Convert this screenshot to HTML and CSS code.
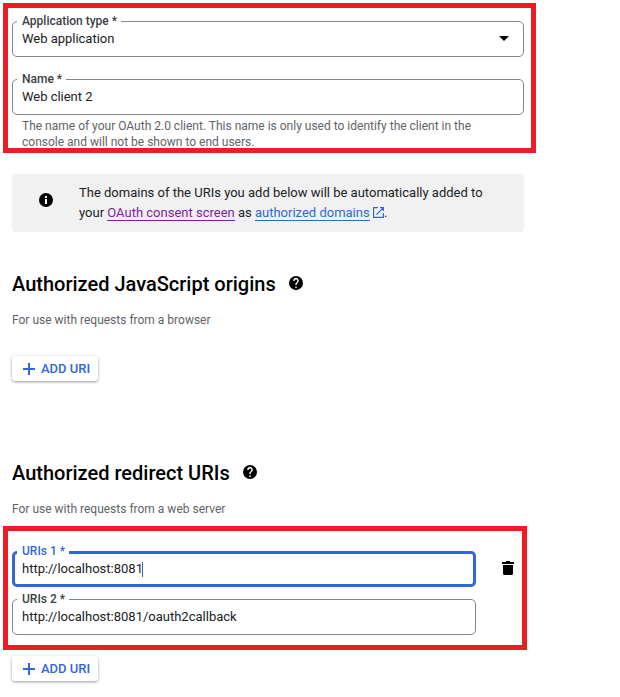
FILE: index.html
```html
<!DOCTYPE html>
<html lang="en">
<head>
<meta charset="utf-8">
<title>OAuth client</title>
<link rel="stylesheet" href="styles.css">
</head>
<body>
<main>
  <section class="marked marked-client">
    <div class="field">
      <label class="label">Application type *</label>
      <span class="value">Web application</span>
      <svg class="caret" width="10" height="5" viewBox="0 0 10 5"><path d="M0 0h10L5 5z"/></svg>
    </div>
    <div class="field field-name">
      <label class="label">Name *</label>
      <span class="value">Web client 2</span>
    </div>
    <p class="hint">The name of your OAuth 2.0 client. This name is only used to identify the client in the<br>console and will not be shown to end users.</p>
  </section>

  <aside class="notice">
    <svg class="info" width="14" height="14" viewBox="0 0 14 14"><circle cx="7" cy="7" r="7"/><path fill="#fff" d="M6 3h2v2H6zM6 6h2v5H6z"/></svg>
    <p>The domains of the URIs you add below will be automatically added to<br>your <a class="visited">OAuth consent screen</a> as <a>authorized domains</a> <svg class="open" width="11" height="11" viewBox="0 0 11 11"><path d="M5 .6H.6v9.8h9.8V6M7 .6h3.4V4M10.2.8 3.4 7.6" fill="none" stroke="#3367d6" stroke-width="1.2"/></svg>.</p>
  </aside>

  <section class="group origins">
    <h2>Authorized JavaScript origins <svg class="help" width="14" height="14" viewBox="2 2 20 20"><path d="M12 2a10 10 0 1 0 0 20 10 10 0 0 0 0-20zm1 17h-2v-2h2zm2.070-7.750-.9.920C13.450 12.900 13 13.500 13 15h-2v-.5c0-1.100.450-2.100 1.170-2.830l1.240-1.260A2 2 0 1 0 10 9H8a4 4 0 1 1 7.070 2.250z"/></svg></h2>
    <p class="sub">For use with requests from a browser</p>
    <button class="add"><svg width="12" height="12" viewBox="0 0 12 12"><path d="M5 0h2v5h5v2H7v5H5V7H0V5h5z" fill="#3367d6"/></svg><span>ADD URI</span></button>
  </section>

  <section class="group redirects">
    <h2>Authorized redirect URIs <svg class="help" width="14" height="14" viewBox="2 2 20 20"><path d="M12 2a10 10 0 1 0 0 20 10 10 0 0 0 0-20zm1 17h-2v-2h2zm2.070-7.750-.9.920C13.450 12.900 13 13.500 13 15h-2v-.5c0-1.100.450-2.100 1.170-2.830l1.240-1.260A2 2 0 1 0 10 9H8a4 4 0 1 1 7.070 2.250z"/></svg></h2>
    <p class="sub">For use with requests from a web server</p>
  </section>
  <section class="marked marked-uris">
    <div class="row">
      <div class="field uri focused">
        <label class="label">URIs 1 *</label>
        <span class="value">http://localhost:8081</span><i class="cursor"></i>
      </div>
      <svg class="trash" width="12" height="14" viewBox="0 0 12 14"><path d="M4 0h4v1h4v2H0V1h4zM1 4h10v8.500q0 1.500-1.500 1.500h-7Q1 14 1 12.500z"/></svg>
    </div>
    <div class="field uri">
      <label class="label">URIs 2 *</label>
      <span class="value">http://localhost:8081/oauth2callback</span>
    </div>
  </section>
  <button class="add add-last"><svg width="12" height="12" viewBox="0 0 12 12"><path d="M5 0h2v5h5v2H7v5H5V7H0V5h5z" fill="#3367d6"/></svg><span>ADD URI</span></button>
</main>
</body>
</html>
```
FILE: styles.css
```css
* { box-sizing: border-box; }
body { margin: 0; background: #fff; font-family: Roboto, sans-serif; color: #202124; }
main { width: 620px; height: 697px; padding-top: 3px; overflow: hidden; }
p, h2 { margin: 0; }

.marked { margin-left: 3px; border: 5px solid #ee1c25; }
.marked-client { width: 533px; height: 150px; padding: 13px 0 0 4px; }
.marked-uris { width: 524px; height: 124px; padding: 20px 0 0 4px; }

.field {
  position: relative;
  display: flex;
  align-items: center;
  width: 512px;
  height: 36px;
  padding: 0 14px 0 9px;
  border: 1px solid #80868b;
  border-radius: 5px;
}
.field-name { margin-top: 22px; }
.label {
  position: absolute;
  top: -8px;
  left: 4px;
  padding: 0 4px 0 5px;
  background: #fff;
  color: #3c4043;
  font-size: 12px;
  font-weight: 500;
  line-height: 14px;
  white-space: nowrap;
}
.value { font-size: 13px; line-height: 20px; white-space: nowrap; }
.marked-client .value { letter-spacing: -.02px; }
.caret { margin: -1px 0 0 auto; }
.hint {
  margin: 3px 0 0 10px;
  color: #5f6368;
  font-size: 12px;
  line-height: 16px;
  white-space: nowrap;
}

.notice {
  display: flex;
  width: 512px;
  height: 58px;
  margin: 21px 0 0 12px;
  padding: 9px 0 0 27px;
  border-radius: 4px;
  background: #f1f1f1;
}
.info { margin-top: 10px; }
.notice p { margin-left: 26px; font-size: 13px; line-height: 20px; white-space: nowrap; }
.notice a { border-bottom: 1px solid #3367d6; color: #3367d6; }
.notice .visited { border-color: #7b1fa2; color: #7b1fa2; }
.open { vertical-align: -1px; }

.group { margin-left: 12px; }
.origins { height: 189px; margin-top: 40px; }
.redirects { height: 65px; }
h2 { display: flex; align-items: center; height: 24px; color: #000; font-size: 20px; font-weight: 500; line-height: 24px; white-space: nowrap; }
.help { margin: -2px 0 0 13px; }
.sub { margin-top: 16px; color: #5f6368; font-size: 12px; line-height: 16px; }

.add {
  display: flex;
  align-items: center;
  gap: 6px;
  width: 86px;
  height: 25px;
  margin-top: 28px;
  padding: 0 0 0 11px;
  border: 0;
  border-radius: 3px;
  background: #fff;
  box-shadow: 0 1px 3px rgba(0, 0, 0, .4);
  color: #3367d6;
  font: 500 13px/25px Roboto, sans-serif;
  white-space: nowrap;
}
.add-last { margin: 6px 0 0 12px; }

.row { display: flex; align-items: center; gap: 26px; margin-bottom: 12px; }
.uri { width: 464px; }
.focused { border: 3px solid #3367d6; padding-left: 7px; }
.focused .label { top: -10px; left: 2px; color: #3367d6; }
.cursor { width: 1px; height: 15px; margin-left: -1px; background: #3367d6; }
.trash { margin-top: -2px; }
```
